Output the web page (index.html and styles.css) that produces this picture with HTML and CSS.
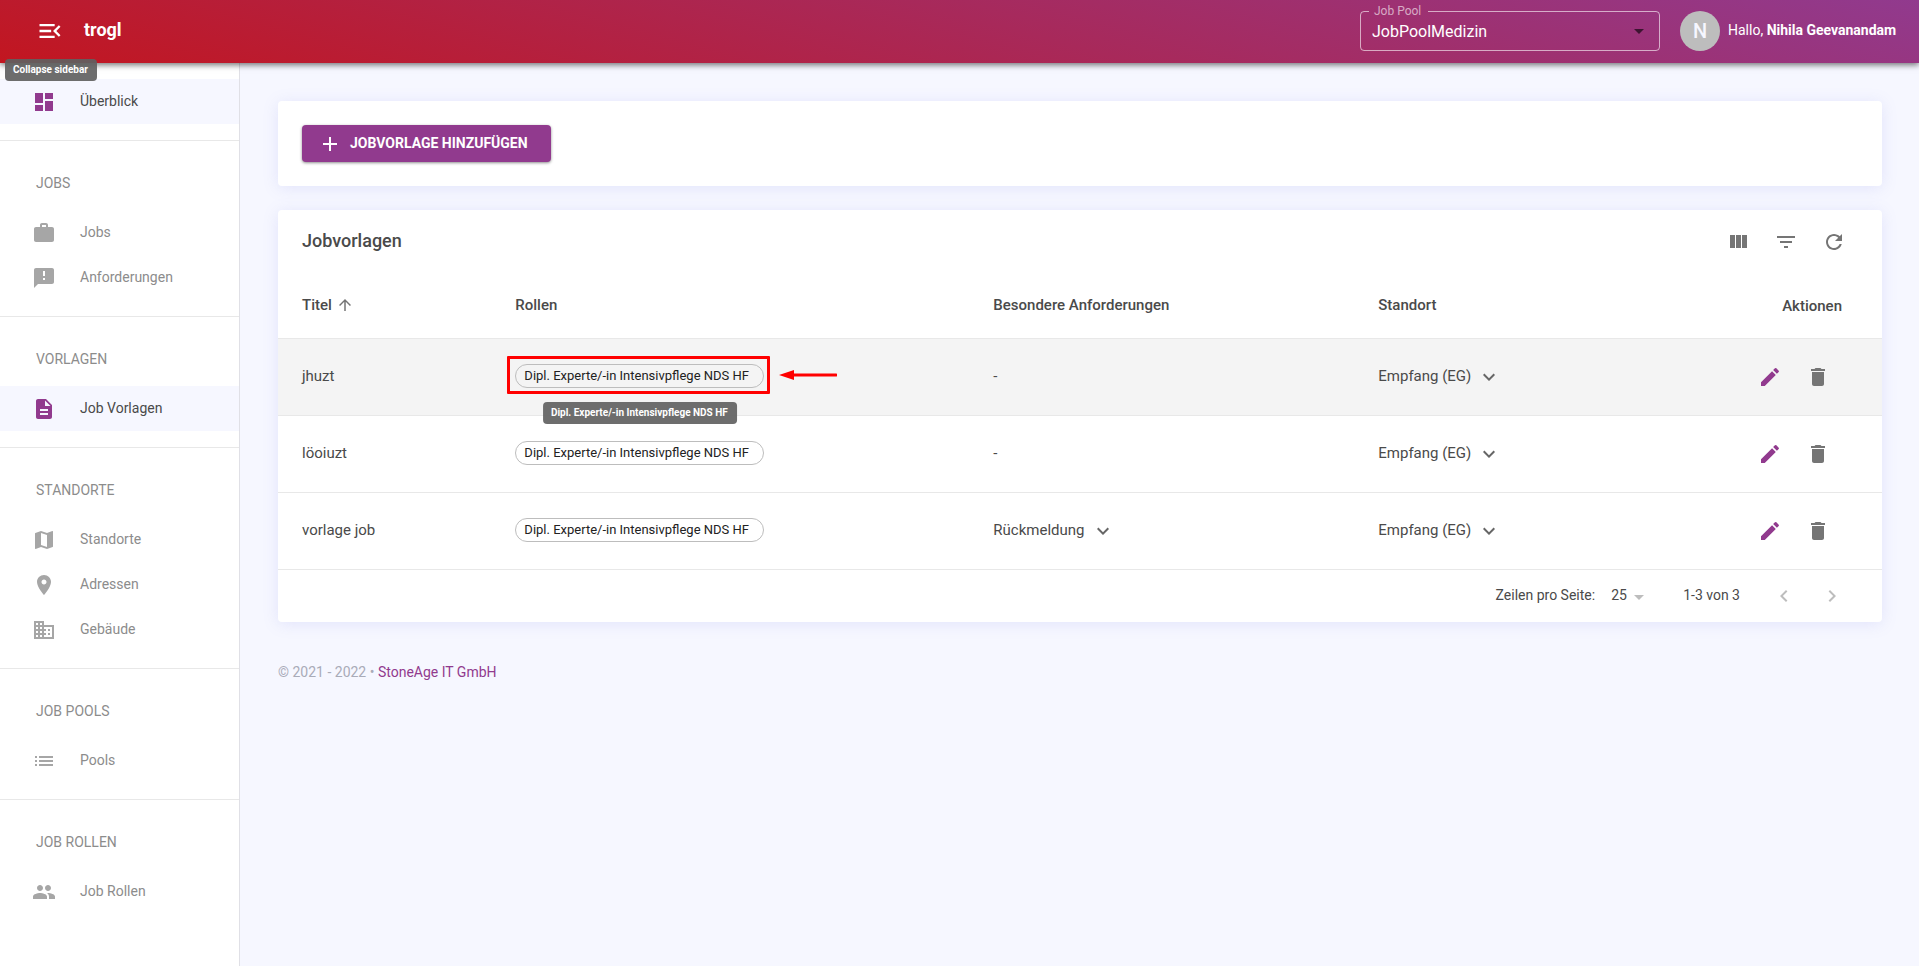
FILE: index.html
```html
<!DOCTYPE html>
<html lang="de">
<head>
<meta charset="utf-8">
<title>trogl – Jobvorlagen</title>
<link rel="stylesheet" href="styles.css">
</head>
<body>
<svg class="sprite" aria-hidden="true">
  <symbol id="i-expand" viewBox="0 0 24 24"><path d="M7.41 8.59 12 13.17l4.59-4.58L18 10l-6 6-6-6z"/></symbol>
  <symbol id="i-edit" viewBox="0 0 24 24"><path d="M3 17.25V21h3.75L17.81 9.94l-3.75-3.75L3 17.25zM20.71 7.04c.39-.39.39-1.02 0-1.41l-2.34-2.34a.9959.9959 0 0 0-1.41 0l-1.83 1.83 3.75 3.75 1.83-1.83z"/></symbol>
  <symbol id="i-delete" viewBox="0 0 24 24"><path d="M6 19c0 1.1.9 2 2 2h8c1.1 0 2-.9 2-2V7H6v12zM19 4h-3.5l-1-1h-5l-1 1H5v2h14V4z"/></symbol>
</svg>

<header class="topbar">
  <div class="brand">
    <button class="menu-btn" type="button" aria-label="Collapse sidebar" aria-describedby="tip-menu">
      <svg class="icon-lg" viewBox="0 0 24 24"><path d="M3 18h13v-2H3v2zm0-5h10v-2H3v2zm0-7v2h13V6H3zm18 9.59L17.42 12 21 8.41 19.59 7l-5 5 5 5L21 15.59z"/></svg>
    </button>
    <span class="brand-name">trogl</span>
    <span class="tooltip tooltip-menu" id="tip-menu" role="tooltip">Collapse sidebar</span>
  </div>
  <div class="account">
    <div class="pool">
      <label class="pool-label" for="pool">Job Pool</label>
      <select class="pool-select" id="pool"><option>JobPoolMedizin</option></select>
      <fieldset class="pool-outline" aria-hidden="true"><legend>Job Pool</legend></fieldset>
      <svg class="pool-arrow" viewBox="0 0 24 24"><path d="m7 10 5 5 5-5z"/></svg>
    </div>
    <div class="user">
      <span class="avatar">N</span>
      <span class="greeting">Hallo, <b>Nihila Geevanandam</b></span>
    </div>
  </div>
</header>

<div class="layout">
  <nav class="sidebar">
    <section class="nav-group nav-group-first">
      <a class="nav-item active" href="#"><svg class="icon" viewBox="0 0 24 24"><path d="M3 13h8V3H3v10zm0 8h8v-6H3v6zm10 0h8V11h-8v10zm0-18v6h8V3h-8z"/></svg><span class="label">Überblick</span></a>
    </section>
    <section class="nav-group">
      <h2 class="nav-title">JOBS</h2>
      <a class="nav-item" href="#"><svg class="icon" viewBox="0 0 24 24"><path d="M20 6h-4V4c0-1.11-.89-2-2-2h-4c-1.11 0-2 .89-2 2v2H4c-1.11 0-2 .89-2 2v11c0 1.11.89 2 2 2h16c1.11 0 2-.89 2-2V8c0-1.11-.89-2-2-2zm-6 0h-4V4h4v2z"/></svg><span class="label">Jobs</span></a>
      <a class="nav-item" href="#"><svg class="icon" viewBox="0 0 24 24"><path d="M20 2H4c-1.1 0-1.99.9-1.99 2L2 22l4-4h14c1.1 0 2-.9 2-2V4c0-1.1-.9-2-2-2zm-7 12h-2v-2h2v2zm0-4h-2V5h2v5z"/></svg><span class="label">Anforderungen</span></a>
    </section>
    <section class="nav-group">
      <h2 class="nav-title">VORLAGEN</h2>
      <a class="nav-item active" href="#"><svg class="icon" viewBox="0 0 24 24"><path d="M14 2H6c-1.1 0-1.99.9-1.99 2L4 20c0 1.1.89 2 1.99 2H18c1.1 0 2-.9 2-2V8l-6-6zm2 16H8v-2h8v2zm0-4H8v-2h8v2zm-3-5V3.5L18.5 9H13z"/></svg><span class="label">Job Vorlagen</span></a>
    </section>
    <section class="nav-group">
      <h2 class="nav-title">STANDORTE</h2>
      <a class="nav-item" href="#"><svg class="icon" viewBox="0 0 24 24"><path d="m20.5 3-.16.03L15 5.1 9 3 3.36 4.9c-.21.07-.36.25-.36.48V20.500c0 .28.22.5.5.5l.16-.03L9 18.900l6 2.100 5.640-1.900c.21-.07.36-.25.36-.48V3.500c0-.28-.22-.5-.5-.5zM15 19l-6-2.110V5l6 2.110V19z"/></svg><span class="label">Standorte</span></a>
      <a class="nav-item" href="#"><svg class="icon" viewBox="0 0 24 24"><path d="M12 2C8.130 2 5 5.130 5 9c0 5.250 7 13 7 13s7-7.750 7-13c0-3.870-3.130-7-7-7zm0 9.500c-1.380 0-2.500-1.120-2.500-2.500s1.120-2.500 2.500-2.500 2.500 1.120 2.500 2.500-1.120 2.500-2.500 2.500z"/></svg><span class="label">Adressen</span></a>
      <a class="nav-item" href="#"><svg class="icon" viewBox="0 0 24 24"><path d="M12 7V3H2v18h20V7H12zM6 19H4v-2h2v2zm0-4H4v-2h2v2zm0-4H4V9h2v2zm0-4H4V5h2v2zm4 12H8v-2h2v2zm0-4H8v-2h2v2zm0-4H8V9h2v2zm0-4H8V5h2v2zm10 12h-8v-2h2v-2h-2v-2h2v-2h-2V9h8v10zm-2-8h-2v2h2v-2zm0 4h-2v2h2v-2z"/></svg><span class="label">Gebäude</span></a>
    </section>
    <section class="nav-group">
      <h2 class="nav-title">JOB POOLS</h2>
      <a class="nav-item" href="#"><svg class="icon" viewBox="0 0 24 24"><path d="M3 13h2v-2H3v2zm0 4h2v-2H3v2zm0-8h2V7H3v2zm4 4h14v-2H7v2zm0 4h14v-2H7v2zM7 7v2h14V7H7z"/></svg><span class="label">Pools</span></a>
    </section>
    <section class="nav-group">
      <h2 class="nav-title">JOB ROLLEN</h2>
      <a class="nav-item" href="#"><svg class="icon" viewBox="0 0 24 24"><path d="M16 11c1.660 0 2.990-1.340 2.990-3S17.660 5 16 5c-1.660 0-3 1.340-3 3s1.340 3 3 3zm-8 0c1.660 0 2.990-1.340 2.990-3S9.660 5 8 5C6.340 5 5 6.340 5 8s1.340 3 3 3zm0 2c-2.330 0-7 1.170-7 3.500V19h14v-2.500c0-2.330-4.670-3.500-7-3.500zm8 0c-.29 0-.62.02-.97.05 1.160.84 1.970 1.970 1.970 3.450V19h6v-2.500c0-2.330-4.670-3.500-7-3.500z"/></svg><span class="label">Job Rollen</span></a>
    </section>
  </nav>

  <main class="content">
    <section class="card card-actions">
      <button class="add-btn" type="button"><svg class="icon" viewBox="0 0 24 24"><path d="M19 13h-6v6h-2v-6H5v-2h6V5h2v6h6v2z"/></svg><span class="label">JOBVORLAGE HINZUFÜGEN</span></button>
    </section>

    <section class="card">
      <div class="toolbar">
        <h1 class="card-title">Jobvorlagen</h1>
        <div class="tools">
          <button class="icon-btn" type="button" aria-label="Spalten"><svg class="icon" viewBox="0 0 24 24"><path d="M10 18h5V5h-5v13zm-6 0h5V5H4v13zM16 5v13h5V5h-5z"/></svg></button>
          <button class="icon-btn" type="button" aria-label="Filter"><svg class="icon" viewBox="0 0 24 24"><path d="M10 18h4v-2h-4v2zM3 6v2h18V6H3zm3 7h12v-2H6v2z"/></svg></button>
          <button class="icon-btn" type="button" aria-label="Aktualisieren"><svg class="icon" viewBox="0 0 24 24"><path d="M17.650 6.350C16.200 4.900 14.210 4 12 4c-4.420 0-7.990 3.580-7.990 8s3.570 8 7.990 8c3.730 0 6.840-2.550 7.730-6h-2.080c-.82 2.330-3.040 4-5.650 4-3.310 0-6-2.690-6-6s2.690-6 6-6c1.660 0 3.140.69 4.220 1.780L13 11h7V4l-2.350 2.350z"/></svg></button>
        </div>
      </div>
      <table class="jobs">
        <colgroup><col class="col-title"><col class="col-roles"><col class="col-reqs"><col class="col-site"><col class="col-actions"></colgroup>
        <thead>
          <tr>
            <th scope="col" aria-sort="ascending"><span class="sort">Titel<svg class="icon-sm" viewBox="0 0 24 24"><path d="m4 12 1.410 1.410L11 7.830V20h2V7.830l5.580 5.590L20 12l-8-8-8 8z"/></svg></span></th>
            <th scope="col">Rollen</th>
            <th scope="col">Besondere Anforderungen</th>
            <th scope="col">Standort</th>
            <th scope="col" class="cell-actions">Aktionen</th>
          </tr>
        </thead>
        <tbody>
          <tr class="hovered">
            <td>jhuzt</td>
            <td>
              <span class="chip-wrap">
                <span class="chip" aria-describedby="tip-role">Dipl. Experte/-in Intensivpflege NDS HF</span>
                <span class="tooltip tooltip-role" id="tip-role" role="tooltip">Dipl. Experte/-in Intensivpflege NDS HF</span>
                <span class="marker"></span>
                <svg class="pointer" viewBox="0 0 58 10"><path d="M0 5 15 0v10z"/><path d="M14 3.500h43a1.500 1.500 0 0 1 0 3H14z"/></svg>
              </span>
            </td>
            <td>-</td>
            <td><button class="expander" type="button">Empfang (EG)<svg class="icon"><use href="#i-expand"/></svg></button></td>
            <td class="cell-actions"><div class="row-actions"><button class="icon-btn edit" type="button" aria-label="Bearbeiten"><svg class="icon"><use href="#i-edit"/></svg></button><button class="icon-btn" type="button" aria-label="Löschen"><svg class="icon"><use href="#i-delete"/></svg></button></div></td>
          </tr>
          <tr>
            <td>löoiuzt</td>
            <td><span class="chip">Dipl. Experte/-in Intensivpflege NDS HF</span></td>
            <td>-</td>
            <td><button class="expander" type="button">Empfang (EG)<svg class="icon"><use href="#i-expand"/></svg></button></td>
            <td class="cell-actions"><div class="row-actions"><button class="icon-btn edit" type="button" aria-label="Bearbeiten"><svg class="icon"><use href="#i-edit"/></svg></button><button class="icon-btn" type="button" aria-label="Löschen"><svg class="icon"><use href="#i-delete"/></svg></button></div></td>
          </tr>
          <tr>
            <td>vorlage job</td>
            <td><span class="chip">Dipl. Experte/-in Intensivpflege NDS HF</span></td>
            <td><button class="expander" type="button">Rückmeldung<svg class="icon"><use href="#i-expand"/></svg></button></td>
            <td><button class="expander" type="button">Empfang (EG)<svg class="icon"><use href="#i-expand"/></svg></button></td>
            <td class="cell-actions"><div class="row-actions"><button class="icon-btn edit" type="button" aria-label="Bearbeiten"><svg class="icon"><use href="#i-edit"/></svg></button><button class="icon-btn" type="button" aria-label="Löschen"><svg class="icon"><use href="#i-delete"/></svg></button></div></td>
          </tr>
        </tbody>
      </table>
      <div class="pagination">
        <label class="label" for="rows">Zeilen pro Seite:</label>
        <span class="rows">
          <select class="rows-select" id="rows"><option>25</option></select>
          <svg class="rows-arrow" viewBox="0 0 24 24"><path d="m7 10 5 5 5-5z"/></svg>
        </span>
        <span class="range label">1-3 von 3</span>
        <button class="icon-btn" type="button" aria-label="Vorherige Seite" disabled><svg class="icon" viewBox="0 0 24 24"><path d="M15.410 7.410 14 6l-6 6 6 6 1.410-1.410L10.830 12z"/></svg></button>
        <button class="icon-btn" type="button" aria-label="Nächste Seite" disabled><svg class="icon" viewBox="0 0 24 24"><path d="M10 6 8.590 7.410 13.170 12l-4.580 4.590L10 18l6-6z"/></svg></button>
      </div>
    </section>

    <footer class="footer">© 2021 - 2022 • <a href="#">StoneAge IT GmbH</a></footer>
  </main>
</div>
</body>
</html>
```

FILE: styles.css
```css
:root {
  --primary: #913a8e;
  --page: #f6f7ff;
  --text: #4a4a4a;
  --muted: #8c8c8c;
  --line: #e8e8e8;
}

* { box-sizing: border-box; }

body {
  margin: 0;
  min-height: 100vh;
  display: flex;
  flex-direction: column;
  background: var(--page);
  color: var(--text);
  font: 400 14px/20px Roboto, "Liberation Sans", sans-serif;
}

button, select { font: inherit; color: inherit; }
button { border: 0; background: none; padding: 0; cursor: pointer; }
svg { fill: currentColor; flex: none; display: block; }

.sprite { position: absolute; width: 0; height: 0; }
.icon { width: 24px; height: 24px; }
.icon-lg { width: 28px; height: 28px; }
.icon-sm { width: 18px; height: 18px; }
.label { padding-bottom: 2px; }

/* Top bar */
.topbar {
  position: relative;
  z-index: 2;
  display: flex;
  align-items: center;
  justify-content: space-between;
  height: 63px;
  padding: 0 19px 1px 36px;
  color: #fff;
  background: linear-gradient(15deg, #c21620, #913a8e);
  box-shadow: 0 2px 6px rgba(0, 0, 0, .55);
}
.brand { display: flex; align-items: center; gap: 20px; }
.brand-name { font-size: 18px; font-weight: 700; line-height: 24px; padding-bottom: 2px; }

.tooltip {
  position: absolute;
  padding: 4px 9px 4px 8px;
  border-radius: 4px;
  background: rgba(97, 97, 97, .92);
  color: #fff;
  font-size: 10px;
  font-weight: 700;
  line-height: 14px;
  white-space: nowrap;
}
.tooltip-menu { left: 5px; top: 59px; }

.account, .user { display: flex; align-items: center; }
.account { gap: 20px; }
.user { gap: 8px; }
.pool { position: relative; width: 300px; height: 40px; }
.pool-label {
  position: absolute;
  left: 14px;
  top: -8px;
  font-size: 12px;
  line-height: 16px;
  color: rgba(255, 255, 255, .6);
}
.pool-outline {
  position: absolute;
  inset: -5px 0 0;
  margin: 0;
  padding: 0 8px;
  border: 1px solid rgba(255, 255, 255, .6);
  border-radius: 4px;
  pointer-events: none;
}
.pool-outline legend { padding: 0 6px; font-size: 12px; line-height: 10px; visibility: hidden; }
.pool-select {
  width: 100%;
  height: 100%;
  padding: 2px 36px 0 12px;
  border: 0;
  background: none;
  appearance: none;
  font-size: 16px;
}
.pool-arrow {
  position: absolute;
  right: 9px;
  top: 8px;
  width: 24px;
  height: 24px;
  color: rgba(0, 0, 0, .6);
  pointer-events: none;
}
.avatar {
  display: grid;
  place-items: center;
  width: 40px;
  height: 40px;
  border-radius: 50%;
  background: #bdbdbd;
  color: var(--page);
  font-size: 20px;
  font-weight: 500;
}
.greeting { min-width: 172px; padding-bottom: 2px; }

/* Shell */
.layout { display: flex; flex: 1; }
.sidebar {
  width: 240px;
  flex: none;
  padding-top: 16px;
  border-right: 1px solid #e0e0e6;
  background: #fff;
}
.nav-group { padding-bottom: 16px; border-bottom: 1px solid var(--line); }
.nav-group:last-child { border-bottom: 0; }
.nav-title {
  margin: 0;
  padding: 16px 36px 0;
  font-size: 14px;
  font-weight: 400;
  line-height: 53px;
  color: var(--muted);
}
.nav-item {
  display: flex;
  align-items: center;
  gap: 24px;
  height: 45px;
  padding: 0 32px;
  color: var(--muted);
  text-decoration: none;
}
.nav-item .icon { color: #a6a6a6; }
.nav-item.active { background: var(--page); color: var(--text); }
.nav-item.active .icon { color: var(--primary); }

/* Content */
.content {
  flex: 1;
  min-width: 0;
  display: flex;
  flex-direction: column;
  gap: 24px;
  padding: 38px 37px 38px 38px;
}
.card {
  border-radius: 4px;
  background: #fff;
  box-shadow: 0 2px 16px rgba(125, 130, 230, .16);
}
.card-actions { padding: 24px; }
.add-btn {
  display: flex;
  align-items: center;
  gap: 8px;
  min-width: 249px;
  height: 37px;
  padding: 0 16px;
  border-radius: 4px;
  background: var(--primary);
  color: #fff;
  font-weight: 700;
  box-shadow: 0 1px 3px rgba(0, 0, 0, .45);
}

.toolbar {
  display: flex;
  align-items: center;
  justify-content: space-between;
  height: 64px;
  padding: 0 24px;
  color: #757575;
}
.card-title { margin: 0; padding-bottom: 2px; font-size: 18px; font-weight: 500; line-height: 24px; color: var(--text); }
.tools, .row-actions { display: flex; }
.icon-btn { width: 48px; height: 48px; display: grid; place-items: center; color: #757575; }
.icon-btn.edit { color: var(--primary); }
.icon-btn:disabled { color: #bdbdbd; }

.jobs { width: 100%; table-layout: fixed; border-collapse: separate; border-spacing: 0; }
.col-title { width: 13.8%; }
.col-roles { width: 29.8%; }
.col-reqs { width: 24%; }
.col-site { width: 18%; }
.jobs th, .jobs td { padding: 13px 16px 15px; border-bottom: 1px solid var(--line); text-align: left; }
.jobs th { height: 65px; font-size: 15px; font-weight: 500; }
.jobs td { height: 77px; font-size: 15px; }
.jobs th:first-child, .jobs td:first-child { padding-left: 24px; }
.jobs .cell-actions { padding: 14px 40px 14px 16px; text-align: right; }
.row-actions { justify-content: flex-end; }
.hovered { background: #f4f4f4; }
.sort, .expander { display: inline-flex; align-items: center; gap: 4px; }
.sort { vertical-align: bottom; }
.sort .icon-sm { color: #757575; }
.expander { gap: 6px; vertical-align: middle; }
.expander .icon { color: #666; margin-top: 2px; }

.chip-wrap { position: relative; display: inline-block; vertical-align: middle; }
.chip {
  display: inline-block;
  min-width: 249px;
  padding: 0 8px;
  border: 1px solid #bdbdbd;
  border-radius: 12px;
  color: #222;
  font-size: 13px;
  line-height: 22px;
  white-space: nowrap;
  vertical-align: middle;
}
.tooltip-role { top: 38px; left: 50%; transform: translateX(-50%); z-index: 1; }
.marker { position: absolute; inset: -8px -6px -6px -8px; border: 3px solid #f00; border-radius: 1px; }
.pointer { position: absolute; left: calc(100% + 15px); top: 6px; width: 58px; height: 10px; color: #f00; }

.pagination {
  display: flex;
  align-items: center;
  justify-content: flex-end;
  height: 52px;
  padding-right: 26px;
}
.rows { position: relative; margin: 0 32px 0 8px; }
.rows-select { padding: 0 24px 2px 8px; border: 0; background: none; appearance: none; }
.rows-arrow { position: absolute; right: 0; top: 0; width: 24px; height: 24px; color: #bdbdbd; pointer-events: none; }
.range { margin-right: 20px; }

.footer { margin-top: 16px; color: #a9abb8; }
.footer a { color: var(--primary); text-decoration: none; }
```
